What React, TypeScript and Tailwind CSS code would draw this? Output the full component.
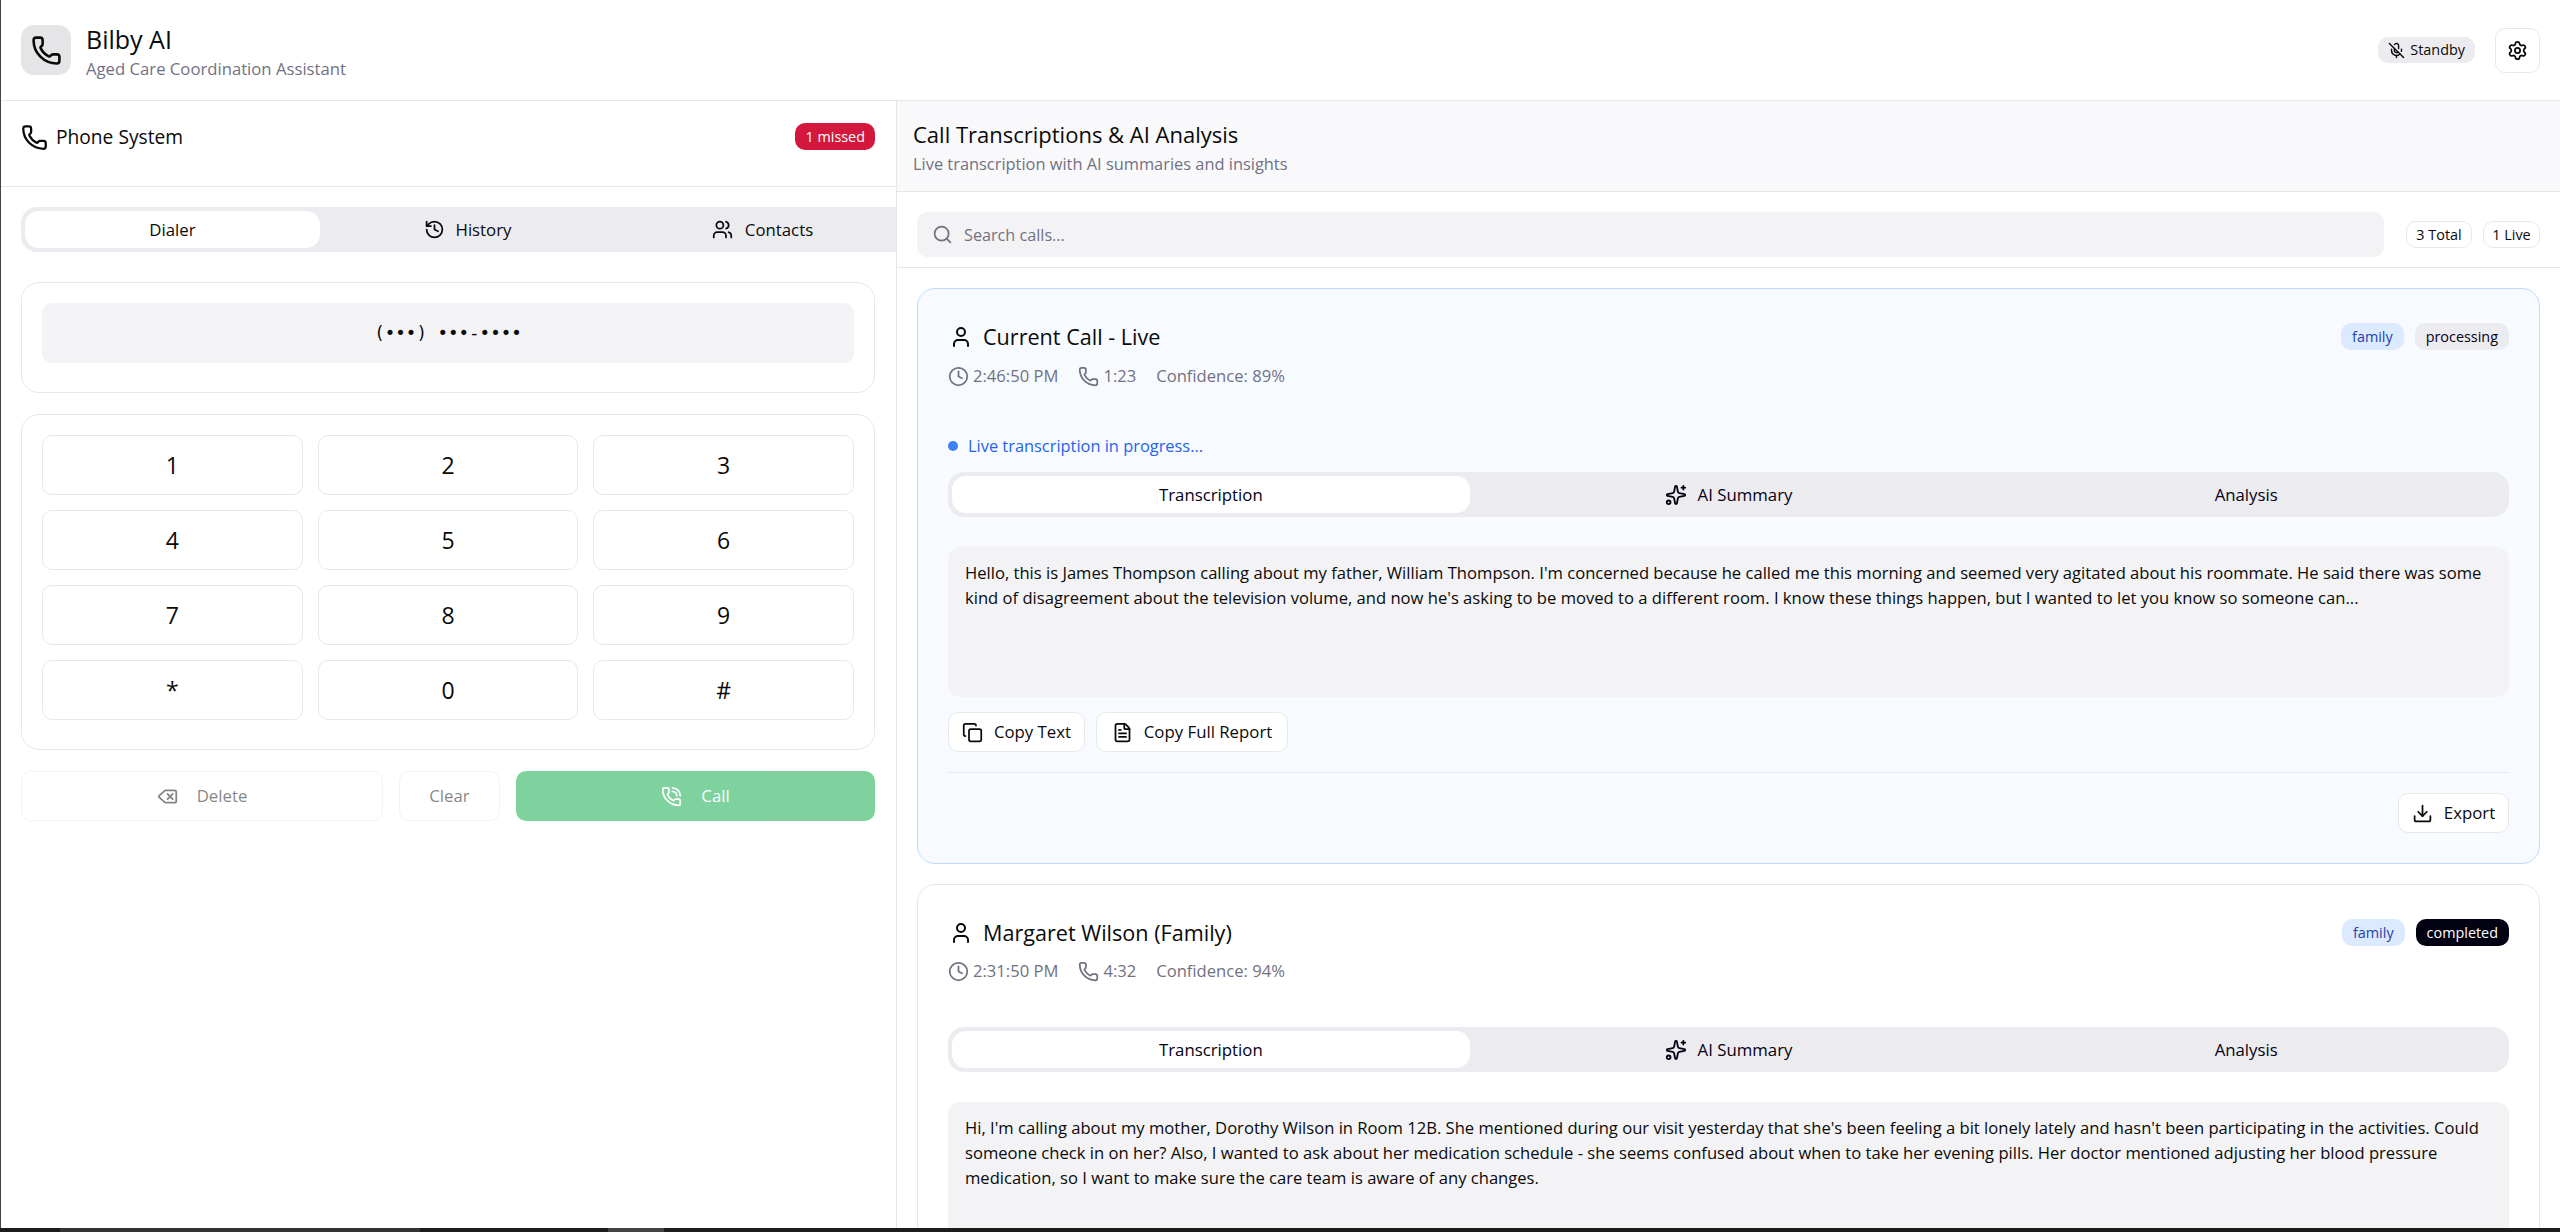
import {
  Clock,
  Copy,
  Delete,
  Download,
  FileText,
  History,
  MicOff,
  Phone,
  PhoneCall,
  Search,
  Settings,
  Sparkles,
  User,
  Users,
} from "lucide-react";

const keys = ["1", "2", "3", "4", "5", "6", "7", "8", "9", "*", "0", "#"];

function Meta({ time, duration, confidence }: { time: string; duration: string; confidence: string }) {
  return (
    <div className="flex h-[24px] items-center text-[16.6px] text-[#717182]">
      <Clock className="h-[21px] w-[21px]" strokeWidth={2} />
      <span className="ml-[4px]">{time}</span>
      <Phone className="ml-[20px] h-[21px] w-[21px]" strokeWidth={2} />
      <span className="ml-[4px]">{duration}</span>
      <span className="ml-[20px]">{confidence}</span>
    </div>
  );
}

function CardTabs() {
  return (
    <div className="flex h-[45px] items-stretch rounded-[16px] bg-[#ececf0] p-[4px] text-[16.8px] font-medium text-[#030213]">
      <div className="flex flex-1 items-center justify-center rounded-[14px] bg-white">Transcription</div>
      <div className="flex flex-1 items-center justify-center gap-[11px]">
        <Sparkles className="h-[22px] w-[22px]" strokeWidth={2} />
        AI Summary
      </div>
      <div className="flex flex-1 items-center justify-center">Analysis</div>
    </div>
  );
}

function Badge({ tone, children }: { tone: string; children: string }) {
  return (
    <span className={`flex h-[27px] items-center rounded-[10px] px-[11px] text-[14.4px] font-medium ${tone}`}>
      {children}
    </span>
  );
}

function OutlineButton({ children, className = "" }: { children: React.ReactNode; className?: string }) {
  return (
    <button
      className={`flex h-[40px] items-center justify-center rounded-[10px] border border-[#e8e8e8] bg-white text-[16.8px] font-medium text-[#0a0a0a] ${className}`}
    >
      {children}
    </button>
  );
}

export default function App() {
  return (
    <div
      className="flex h-screen flex-col overflow-hidden bg-white text-[#0a0a0a]"
      style={{ fontFamily: '"Open Sans", "Noto Sans", sans-serif' }}
    >
      <div className="flex min-h-0 flex-1 flex-col border-l border-[#444444]">
        <header className="flex h-[101px] shrink-0 items-center justify-between border-b border-[#e6e6e6] pl-[20px] pr-[20px]">
          <div className="flex items-center gap-[15px]">
            <div className="flex h-[50px] w-[50px] items-center justify-center rounded-[13px] bg-[#e5e5e8]">
              <Phone className="h-[31px] w-[31px]" strokeWidth={2} />
            </div>
            <div className="pt-[5px]">
              <h1 className="text-[25px] font-medium leading-[30px]">Bilby AI</h1>
              <p className="mt-[2px] text-[16.7px] leading-[26px] text-[#717182]">Aged Care Coordination Assistant</p>
            </div>
          </div>
          <div className="flex items-center gap-[20px]">
            <span className="flex h-[26px] items-center gap-[5px] rounded-[10px] bg-[#ececf0] px-[10px] text-[14.4px] font-medium">
              <MicOff className="h-[17px] w-[17px]" strokeWidth={2} />
              Standby
            </span>
            <button className="flex h-[45px] w-[45px] items-center justify-center rounded-[10px] border border-[#e8e8e8]">
              <Settings className="h-[21px] w-[21px]" strokeWidth={2} />
            </button>
          </div>
        </header>

        <main className="flex min-h-0 flex-1">
          <section className="w-[896px] shrink-0 overflow-hidden border-r border-[#e6e6e6]">
            <div className="flex h-[86px] items-start justify-between border-b border-[#e6e6e6] pl-[20px] pr-[21px] pt-[22px]">
              <div className="flex items-center gap-[8px]">
                <Phone className="h-[27px] w-[27px]" strokeWidth={2} />
                <span className="text-[19.2px] font-medium leading-[28px]">Phone System</span>
              </div>
              <span className="flex h-[27px] items-center rounded-[10px] bg-[#d4183d] px-[10px] text-[14.4px] font-medium text-white">
                1 missed
              </span>
            </div>

            <div className="pl-[20px] pt-[20px]">
              <div className="flex h-[45px] w-[893px] items-stretch rounded-[16px] bg-[#ececf0] p-[4px] text-[16.8px] font-medium">
                <div className="flex flex-1 items-center justify-center rounded-[14px] bg-white">Dialer</div>
                <div className="flex flex-1 items-center justify-center gap-[11px]">
                  <History className="h-[21px] w-[21px]" strokeWidth={2} />
                  History
                </div>
                <div className="flex flex-1 items-center justify-center gap-[12px]">
                  <Users className="h-[21px] w-[21px]" strokeWidth={2} />
                  Contacts
                </div>
              </div>
            </div>

            <div className="flex w-[874px] flex-col gap-[21px] pl-[20px] pt-[30px]">
              <div className="h-[111px] rounded-[18px] border border-[#e6e6e6] px-[20px] pt-[20px]">
                <div
                  className="flex h-[60px] items-center justify-center rounded-[10px] bg-[#f3f3f5] text-[17.5px]"
                  style={{ fontFamily: '"DejaVu Sans Mono", monospace' }}
                >
                  (•••) •••-••••
                </div>
              </div>

              <div className="rounded-[18px] border border-[#e6e6e6] px-[20px] pb-[29px] pt-[20px]">
                <div className="grid grid-cols-3 gap-x-[15px] gap-y-[15px]">
                  {keys.map((k) => (
                    <button
                      key={k}
                      className="flex h-[60px] items-center justify-center rounded-[10px] border border-[#e8e8e8] bg-white text-[23px] font-medium"
                    >
                      {k}
                    </button>
                  ))}
                </div>
              </div>

              <div className="flex h-[50px] gap-[16px] text-[16.8px] font-medium">
                <button className="flex w-[362px] items-center justify-center gap-[19px] rounded-[10px] border border-[#e8e8e8] opacity-50">
                  <Delete className="h-[21px] w-[21px]" strokeWidth={2} />
                  Delete
                </button>
                <button className="w-[101px] rounded-[10px] border border-[#e8e8e8] opacity-50">Clear</button>
                <button className="flex flex-1 items-center justify-center gap-[19px] rounded-[10px] bg-[#00a63e] text-white opacity-50">
                  <PhoneCall className="h-[21px] w-[21px]" strokeWidth={2} />
                  Call
                </button>
              </div>
            </div>
          </section>

          <section className="flex min-w-0 flex-1 flex-col overflow-hidden">
            <div className="h-[91px] shrink-0 border-b border-[#e6e6e6] bg-[#f9f9fb] pl-[16px] pt-[18px]">
              <h2 className="text-[22px] font-medium leading-[30px]">Call Transcriptions &amp; AI Analysis</h2>
              <p className="mt-[2px] text-[16.4px] leading-[26px] text-[#717182]">
                Live transcription with AI summaries and insights
              </p>
            </div>

            <div className="flex h-[76px] shrink-0 items-center gap-[22px] border-b border-[#e6e6e6] pb-[10px] pl-[20px] pr-[20px] pt-[20px]">
              <div className="flex h-[45px] flex-1 items-center gap-[11px] rounded-[10px] bg-[#f3f3f5] pl-[15px] text-[16.2px] text-[#717182]">
                <Search className="h-[21px] w-[21px]" strokeWidth={2} />
                <span className="pt-[2px]">Search calls...</span>
              </div>
              <div className="flex gap-[11px] text-[14.4px] font-medium">
                <span className="flex h-[27px] w-[66px] items-center justify-center rounded-[10px] border border-[#e8e8e8]">3 Total</span>
                <span className="flex h-[27px] w-[57px] items-center justify-center rounded-[10px] border border-[#e8e8e8]">1 Live</span>
              </div>
            </div>

            <div className="flex min-h-0 flex-1 flex-col gap-[20px] overflow-hidden pl-[20px] pr-[20px] pt-[20px]">
              <article className="h-[576px] shrink-0 rounded-[18px] border border-[#bedbff] bg-[#f7faff] px-[30px] pt-[26px]">
                <div className="flex h-[33px] items-start justify-between">
                  <div className="flex h-[33px] items-center gap-[10px] pl-px pt-[11px] text-[21.6px]">
                    <User className="h-[24px] w-[24px]" strokeWidth={2} />
                    Current Call - Live
                  </div>
                  <div className="mt-[8px] flex gap-[11px]">
                    <Badge tone="bg-[#dbeafe] text-[#1e40af]">family</Badge>
                    <Badge tone="bg-[#ececf0] text-[#030213]">processing</Badge>
                  </div>
                </div>
                <div className="mt-[16px]">
                  <Meta time="2:46:50 PM" duration="1:23" confidence="Confidence: 89%" />
                </div>
                <div className="mt-[45px] flex h-[26px] items-center gap-[10px] text-[16.4px] text-[#2563eb]">
                  <span className="h-[10px] w-[10px] rounded-full bg-[#3b82f6]" />
                  Live transcription in progress...
                </div>
                <div className="mt-[13px]">
                  <CardTabs />
                </div>
                <div className="mt-[30px] h-[150px] rounded-[12px] bg-[#f3f3f5] px-[17px] pt-[13px] text-[16.6px] leading-[25px]">
                  Hello, this is James Thompson calling about my father, William Thompson. I'm concerned because he called me this morning and seemed very agitated about his roommate. He said there was some kind of disagreement about the television volume, and now he's asking to be moved to a different room. I know these things happen, but I wanted to let you know so someone can...
                </div>
                <div className="mt-[15px] flex gap-[11px]">
                  <OutlineButton className="w-[137px] gap-[11px]">
                    <Copy className="h-[21px] w-[21px]" strokeWidth={2} />
                    Copy Text
                  </OutlineButton>
                  <OutlineButton className="w-[192px] gap-[11px]">
                    <FileText className="h-[21px] w-[21px]" strokeWidth={2} />
                    Copy Full Report
                  </OutlineButton>
                </div>
                <div className="mt-[20px] flex justify-end border-t border-[#e6e9ef] pt-[20px]">
                  <OutlineButton className="w-[111px] gap-[11px]">
                    <Download className="h-[21px] w-[21px]" strokeWidth={2} />
                    Export
                  </OutlineButton>
                </div>
              </article>

              <article className="shrink-0 rounded-[18px] border border-[#e6e6e6] bg-white px-[30px] pt-[34px]">
                <div className="flex items-start justify-between">
                  <div className="flex h-[28px] items-center gap-[10px] pl-px text-[21.6px]">
                    <User className="h-[24px] w-[24px]" strokeWidth={2} />
                    Margaret Wilson (Family)
                  </div>
                  <div className="flex gap-[11px]">
                    <Badge tone="bg-[#dbeafe] text-[#1e40af]">family</Badge>
                    <Badge tone="bg-[#030213] text-white">completed</Badge>
                  </div>
                </div>
                <div className="mt-[12px]">
                  <Meta time="2:31:50 PM" duration="4:32" confidence="Confidence: 94%" />
                </div>
                <div className="mt-[44px]">
                  <CardTabs />
                </div>
                <div className="mt-[30px] h-[150px] rounded-[12px] bg-[#f3f3f5] px-[17px] pt-[13px] text-[16.6px] leading-[25px]">
                  Hi, I'm calling about my mother, Dorothy Wilson in Room 12B. She mentioned during our visit yesterday that she's been feeling a bit lonely lately and hasn't been participating in the activities. Could someone check in on her? Also, I wanted to ask about her medication schedule - she seems confused about when to take her evening pills. Her doctor mentioned adjusting her blood pressure medication, so I want to make sure the care team is aware of any changes.
                </div>
              </article>
            </div>
          </section>
        </main>
      </div>

      <div className="flex h-[4px] shrink-0 bg-[#1c1c1c]">
        <div className="ml-[60px] w-[360px] bg-[#333333]" />
        <div className="ml-[188px] w-[56px] bg-[#444444]" />
      </div>
    </div>
  );
}
